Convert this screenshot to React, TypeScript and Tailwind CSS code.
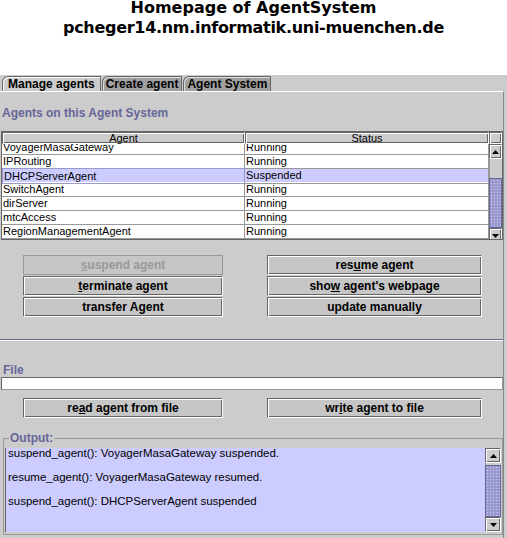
import React from "react"

// Java Metal look: raised bevel for buttons and header cells
const raised =
  "border border-t-[#666666] border-l-[#666666] border-b-white border-r-white shadow-[inset_1px_1px_0_#ffffff,inset_-1px_-1px_0_#666666]"

const agents = [
  { name: "VoyagerMasaGateway", status: "Running" },
  { name: "IPRouting", status: "Running" },
  { name: "DHCPServerAgent", status: "Suspended", selected: true },
  { name: "SwitchAgent", status: "Running" },
  { name: "dirServer", status: "Running" },
  { name: "mtcAccess", status: "Running" },
  { name: "RegionManagementAgent", status: "Running" },
]

const output = [
  "suspend_agent(): VoyagerMasaGateway suspended.",
  "",
  "resume_agent(): VoyagerMasaGateway resumed.",
  "",
  "suspend_agent(): DHCPServerAgent suspended",
]

function Arrow({ up }: { up?: boolean }) {
  return (
    <svg width="7" height="4" viewBox="0 0 7 4">
      {up ? <polygon points="3.5,0 7,4 0,4" fill="#000" /> : <polygon points="0,0 7,0 3.5,4" fill="#000" />}
    </svg>
  )
}

function ScrollBar({ track, thumb }: { track: number; thumb: number }) {
  return (
    <div className="flex flex-col h-full bg-[#cccccc]">
      <div className={`h-[15px] shrink-0 flex items-center justify-center bg-[#cccccc] ${raised}`}>
        <Arrow up />
      </div>
      <div className="shrink-0 border-l border-[#999999]" style={{ height: track }} />
      <div
        className="shrink-0 border border-[#666699] bg-[#9999cc] [background-image:radial-gradient(#ccccff_0.9px,transparent_0.9px)] [background-size:3px_3px]"
        style={{ height: thumb }}
      />
      <div className={`h-[15px] shrink-0 flex items-center justify-center bg-[#cccccc] ${raised}`}>
        <Arrow />
      </div>
    </div>
  )
}

function Btn({ children, disabled }: { children: React.ReactNode; disabled?: boolean }) {
  return (
    <div
      className={`h-[20px] flex items-center justify-center text-[12px] font-bold leading-[14px] bg-[#c6c6c6] ${
        disabled ? "border border-[#999999] text-[#999999]" : `text-black ${raised}`
      }`}
    >
      <span className="whitespace-pre">{children}</span>
    </div>
  )
}

export default function App() {
  return (
    <div className="w-[507px] h-[538px] flex flex-col bg-white overflow-hidden">
      {/* page heading */}
      <div className="h-[75px] shrink-0 text-center font-bold text-[16px] text-black [font-family:'DejaVu_Sans',sans-serif]">
        <div className="leading-[16px]">Homepage of AgentSystem</div>
        <div className="leading-[16px] mt-[4px] tracking-[-0.3px]">pcheger14.nm.informatik.uni-muenchen.de</div>
      </div>

      {/* applet */}
      <div className="flex-1 flex flex-col bg-[#cccccc] text-black text-[11px] [font-family:'Liberation_Sans',Arial,sans-serif]">
        {/* tabs */}
        <div className="flex items-end gap-[1px] pl-[2px] pt-[1px] h-[16px] shrink-0">
          <div className="h-[15px] px-[5px] whitespace-nowrap leading-[14px] text-[12px] font-bold rounded-tl-[6px] border-t border-l border-r border-[#666666] bg-[#cccccc] shadow-[inset_1px_1px_0_#ffffff]">
            Manage agents
          </div>
          <div className="h-[15px] px-[3px] whitespace-nowrap leading-[14px] text-[12px] font-bold rounded-tl-[6px] border-t border-l border-r border-[#666666] bg-[#a0a0a0] shadow-[inset_1px_1px_0_#dddddd]">
            Create agent
          </div>
          <div className="h-[15px] px-[3px] whitespace-nowrap leading-[14px] text-[12px] font-bold rounded-tl-[6px] border-t border-l border-r border-[#666666] bg-[#a0a0a0] shadow-[inset_1px_1px_0_#dddddd]">
            Agent System
          </div>
        </div>

        {/* tab panel */}
        <div className="flex-1 flex flex-col mr-[3px] border-t border-white border-r border-r-[#888888]">
          <div className="mt-[14px] pl-[2px] text-[12px] font-bold leading-[14px] text-[#666699]">
            Agents on this Agent System
          </div>

          {/* agent table */}
          <div className="mt-[11px] ml-[1px] border border-[#666666] bg-white">
            <div className="grid grid-cols-[243px_244px_13px] h-[12px] bg-[#cccccc]">
              <div className={`text-center leading-[10px] text-[11px] ${raised}`}>Agent</div>
              <div className={`text-center leading-[10px] text-[11px] ${raised}`}>Status</div>
              <div className={raised} />
            </div>
            <div className="flex h-[95px] overflow-hidden">
              <div className="w-[487px] overflow-hidden">
                <div className="mt-[-4px]">
                  {agents.map((a) => (
                    <div
                      key={a.name}
                      className={`grid grid-cols-[243px_244px] h-[14px] ${a.selected ? "bg-[#ccccff]" : "bg-white"}`}
                    >
                      <div
                        className={`pl-[1px] leading-[14px] border-b border-r ${
                          a.selected ? "border border-[#9999cc]" : "border-[#999999]"
                        }`}
                      >
                        {a.name}
                      </div>
                      <div className="pl-[1px] leading-[14px] border-b border-r border-[#999999]">{a.status}</div>
                    </div>
                  ))}
                </div>
              </div>
              <div className="w-[13px] h-full">
                <ScrollBar track={19} thumb={50} />
              </div>
            </div>
          </div>

          {/* agent actions */}
          <div className="mt-[15px] pl-[23px] flex gap-[44px]">
            <div className="w-[200px] flex flex-col gap-[1px]">
              <Btn disabled>
                <span className="underline">s</span>uspend agent
              </Btn>
              <Btn>
                <span className="underline">t</span>erminate agent
              </Btn>
              <Btn>transfer Agent</Btn>
            </div>
            <div className="w-[215px] flex flex-col gap-[1px]">
              <Btn>
                res<span className="underline">u</span>me agent
              </Btn>
              <Btn>
                sho<span className="underline">w</span> agent's webpage
              </Btn>
              <Btn>update manually</Btn>
            </div>
          </div>

          <div className="mt-[22px] h-[2px] border-t border-[#666699] border-b border-b-white" />

          {/* file */}
          <div className="mt-[23px] pl-[3px] text-[12px] font-bold leading-[12px] text-[#666699]">File</div>
          <div className="mt-[1px] ml-[1px] h-[13px] bg-white border border-t-[#666666] border-l-[#666666] border-b-[#999999] border-r-[#999999]" />

          <div className="mt-[8px] pl-[23px] flex gap-[44px]">
            <div className="w-[200px]">
              <Btn>
                re<span className="underline">a</span>d agent from file
              </Btn>
            </div>
            <div className="w-[215px]">
              <Btn>
                wr<span className="underline">i</span>te agent to file
              </Btn>
            </div>
          </div>

          {/* output */}
          <fieldset className="mt-[13px] ml-[3px] px-[1px] pb-[2px] border border-[#999999]">
            <legend className="ml-[4px] px-[1px] text-[12px] font-bold leading-[14px] text-[#666699]">Output:</legend>
            <div className="mt-[3px] flex h-[84px] border-l border-[#666666]">
              <div className="flex-1 bg-[#ccccff] pl-[2px] text-[11.5px] overflow-hidden">
                {output.map((l, i) => (
                  <div key={i} className="h-[12px] leading-[10px] whitespace-pre">
                    {l}
                  </div>
                ))}
              </div>
              <div className="w-[16px]">
                <ScrollBar track={2} thumb={52} />
              </div>
            </div>
          </fieldset>
        </div>
      </div>
    </div>
  )
}
